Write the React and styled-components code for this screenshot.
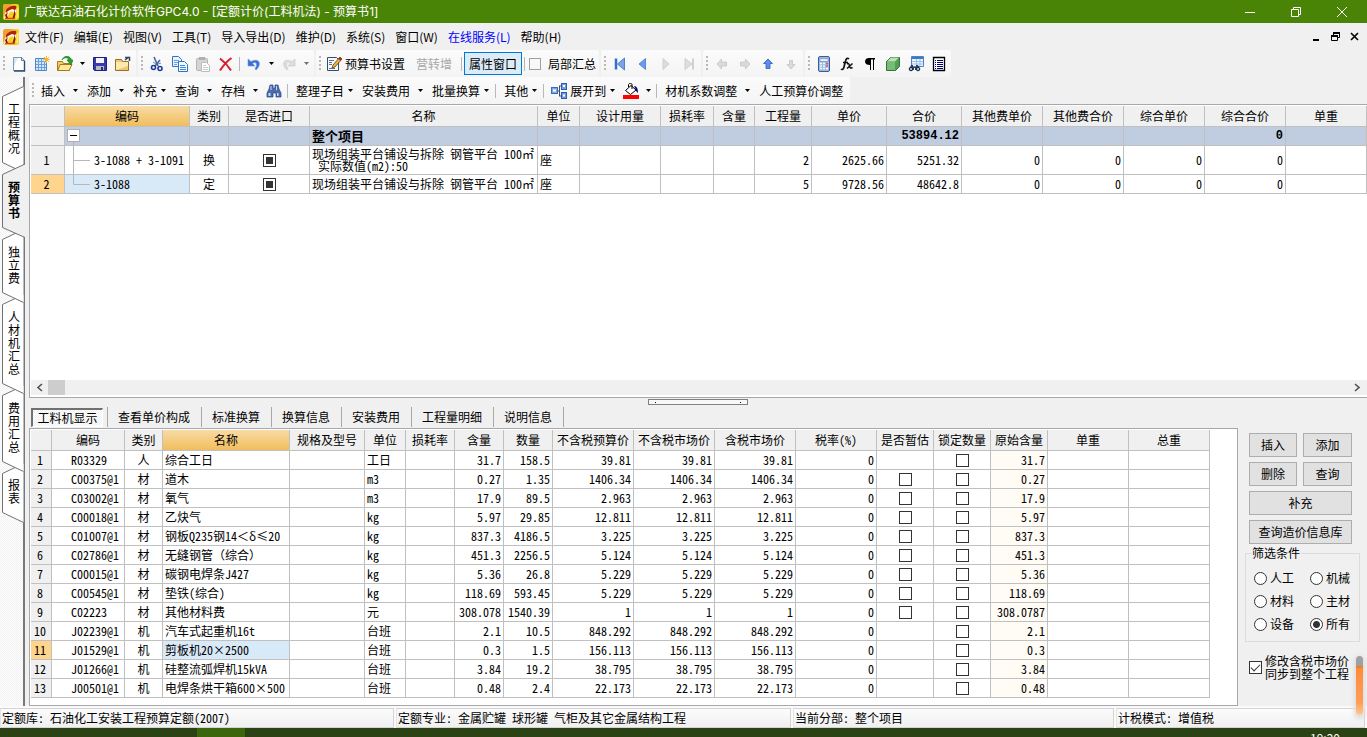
import React, { useState } from 'react';
import styled, { createGlobalStyle, css } from 'styled-components';

const GlobalStyle = createGlobalStyle`
  *, *::before, *::after { box-sizing: border-box; }
  html, body { margin: 0; padding: 0; }
  body {
    overflow: hidden;
    background: #f0f0f0;
    color: #000;
    font: 12px/16px "Noto Sans CJK SC", "Liberation Sans", sans-serif;
  }
  button, input, select { font: inherit; color: inherit; margin: 0; }
  svg { display: block; flex: none; }
`;

/* ---------- frame ---------- */

const Window = styled.div`
  display: flex;
  flex-direction: column;
  height: 100vh;
`;

const TitleBar = styled.header`
  display: flex;
  align-items: center;
  height: 23px;
  padding: 0 5px 0 3px;
  gap: 5px;
  background: #4a8407;
  color: #fff;
`;

const Title = styled.h1`
  flex: 1;
  margin: 0;
  font-family: Inter, "Noto Sans CJK SC", sans-serif;
  font-size: 12px;
  font-weight: 400;
  line-height: 20px;
`;

const WindowButton = styled.button`
  display: flex;
  align-items: center;
  justify-content: center;
  width: 41px;
  height: 20px;
  padding: 0;
  border: 0;
  background: none;
`;

const MenuBar = styled.nav`
  display: flex;
  align-items: center;
  height: 27px;
  padding: 0 3px;
  gap: 10px;
  white-space: nowrap;
`;

const MenuLogo = styled.span`
  margin-right: -4px;
`;

const MenuItem = styled.a`
  color: ${p => (p.$accent ? '#0000ff' : '#000')};
  text-decoration: none;
`;

const ChildControls = styled.div`
  display: flex;
  margin-left: auto;
`;

const ChildButton = styled.button`
  display: flex;
  align-items: center;
  justify-content: center;
  width: 19px;
  height: 16px;
  padding: 0;
  border: 0;
  background: none;
`;

/* ---------- toolbars ---------- */

const Toolbar = styled.div`
  display: flex;
  height: 27px;
  gap: 2px;
  white-space: nowrap;
`;

const ToolGroup = styled.div`
  display: flex;
  align-items: center;
  padding: 0 ${p => (p.$tight ? 1 : 2)}px 0 2px;
  border-radius: 2px;
  background: linear-gradient(#fbfbfb, #f4f4f4);
`;

const Grip = styled.span`
  width: 5px;
  height: 15px;
  background: linear-gradient(#b8b8b8, #b8b8b8) 1px 0 / 2px 2px no-repeat,
    linear-gradient(#b8b8b8, #b8b8b8) 1px 4px / 2px 2px no-repeat,
    linear-gradient(#b8b8b8, #b8b8b8) 1px 8px / 2px 2px no-repeat,
    linear-gradient(#b8b8b8, #b8b8b8) 1px 12px / 2px 2px no-repeat;
`;

const ToolButton = styled.button`
  display: flex;
  align-items: center;
  justify-content: center;
  width: ${p => p.$w || 23}px;
  height: 23px;
  padding: 0;
  border: 0;
  background: none;
`;

const TextButton = styled.button`
  display: flex;
  align-items: center;
  gap: 3px;
  height: 23px;
  padding: 0 ${p => p.$right || 0}px 0 ${p => p.$left || 5}px;
  border: 0;
  background: none;
  &:disabled { color: #a8a8a8; }
`;

const PressedButton = styled.button`
  width: 58px;
  height: 23px;
  padding: 0 4px;
  border: 1px solid #0078d7;
  background: #dcebf8;
  white-space: nowrap;
`;

const Separator = styled.span`
  width: 1px;
  height: 14px;
  margin: 0 ${p => (p.$wide ? 3 : 2)}px 0 2px;
  background: #b8b8b8;
`;

const ArrowSlot = styled.span`
  display: flex;
  width: ${p => (p.$tight ? 13 : 17)}px;
  margin-left: -3px;
  padding-left: ${p => (p.$tight ? 4 : 8)}px;
`;

const ToolCheck = styled.label`
  display: flex;
  align-items: center;
  gap: 7px;
  padding: 0 2px;
`;

/* ---------- workspace ---------- */

const Workspace = styled.div`
  display: flex;
  flex: 1;
  min-height: 0;
`;

const Rail = styled.nav`
  display: flex;
  flex-direction: column;
  flex: none;
  width: 25px;
  padding: 9px 0 0 2px;
  border-right: 2px solid #787878;
  background: repeating-conic-gradient(#f0f0f0 0 25%, #ffffff 0 50%) 0 0 / 2px 2px;
`;

const RailTabButton = styled.button`
  position: relative;
  flex: none;
  width: ${p => (p.$active ? 23 : 21)}px;
  height: ${p => p.$h}px;
  margin-bottom: -9px;
  padding: 0 0 4px;
  border: 0;
  background: none;
  z-index: ${p => p.$z};
  font-weight: ${p => (p.$active ? 700 : 400)};
  line-height: 13px;
`;

const RailShape = styled.svg`
  position: absolute;
  inset: 0;
`;

const RailLabel = styled.span`
  position: relative;
  display: block;
  width: 12px;
  margin-left: 6px;
  word-break: break-all;
`;

const Main = styled.main`
  display: flex;
  flex-direction: column;
  flex: 1;
  min-width: 0;
  padding-left: 4px;
`;

const GridPanel = styled.section`
  display: flex;
  flex-direction: column;
  flex: 1;
  min-height: 0;
  overflow: hidden;
  padding: 1px 0 2px 1px;
  border: 1px solid #a8a8ac;
  border-right: 0;
  background: #fff;
`;

const GridArea = styled.div`
  flex: 1;
  min-height: 0;
  overflow: hidden;
`;

const ScrollTrack = styled.div`
  display: flex;
  align-items: center;
  height: 15px;
  padding: 0 6px 0 5px;
  background: #f0f0f0;
`;

const ScrollThumb = styled.div`
  width: 17px;
  height: 15px;
  margin: 0 auto 0 5px;
  background: #cdcdcd;
`;

const Splitter = styled.div`
  display: flex;
  justify-content: center;
  height: 8px;
  padding-top: 1px;
`;

const SplitHandle = styled.div`
  display: flex;
  justify-content: space-between;
  align-items: center;
  width: 100px;
  height: 6px;
  padding: 0 6px;
  border: 1px solid #808080;
  background: #f8f8f8;
  &::before, &::after { content: ''; width: 1px; height: 1px; background: #000080; }
`;

/* ---------- data tables ---------- */

const Table = styled.table`
  width: ${p => (p.$fill ? '100%' : '1179px')};
  table-layout: fixed;
  border-collapse: separate;
  border-spacing: 0;
  line-height: 12px;
  font-feature-settings: "hwid";
`;

const line = css`
  border-right: 1px solid #c0c0c0;
  border-bottom: 1px solid #c0c0c0;
`;

const Head = styled.th`
  ${line}
  height: 21px;
  padding: 0;
  font-weight: 400;
  white-space: nowrap;
  background: ${p => (p.$current ? 'linear-gradient(#f9dba6, #f0bd5c)' : '#f0f0f0')};
`;

const RowHead = styled.th`
  ${line}
  padding: 0 2px 0 0;
  font-weight: 400;
  background: ${p => (p.$current ? '#ffd48c' : '#f0f0f0')};
`;

const Cell = styled.td`
  ${line}
  height: ${p => p.$h || 19}px;
  padding: 0 2px 0 ${p => (p.$indent ? 19 : 2)}px;
  text-align: ${p => p.$align || 'left'};
  white-space: pre;
  overflow: hidden;
  background: ${p => (p.$current ? '#d8e9f8' : p.$soft ? '#fffbf5' : '#fff')};
`;

const SummaryRow = styled.tr`
  font-size: 13px;
  font-weight: 700;
  font-feature-settings: normal;
  td, th { background: #c0cde0; }
  th { background: #f0f0f0; }
`;

const SummaryNumber = styled(Cell)`
  font-family: "Liberation Mono", monospace;
  font-size: 12px;
`;

const FullWidth = styled.span`
  font-feature-settings: "fwid";
`;

const TreeNode = styled.div`
  display: flex;
  align-items: center;
  gap: 4px;
  margin-left: -2px;
`;

const CheckBox = styled.input.attrs({ type: 'checkbox' })`
  appearance: none;
  display: block;
  flex: none;
  width: ${p => (p.$faint ? 12 : 13)}px;
  height: ${p => (p.$faint ? 12 : 13)}px;
  margin: 0 auto;
  border: 1px solid ${p => (p.$faint ? '#a0a0a0' : '#333')};
  background: ${p => (p.$faint ? '#f8f8f8' : '#fff')};
`;

const SquareBox = styled(CheckBox)`
  &:checked { background: linear-gradient(#333, #333) center / 7px 7px no-repeat #fff; }
`;

const TickBox = styled(CheckBox)`
  margin: 0;
  &:checked {
    background: #fff;
    &::after {
      content: '';
      display: block;
      width: 9px;
      height: 5px;
      margin: 2px 0 0 1px;
      border: solid #333;
      border-width: 0 0 1px 1px;
      rotate: -45deg;
    }
  }
`;

/* ---------- lower area ---------- */

const SubTabs = styled.div`
  display: flex;
  align-items: center;
  height: 22px;
  padding-left: 2px;
`;

const SubTab = styled.button`
  height: 20px;
  padding: 0 11px 0 10px;
  border: 0;
  border-left: 1px solid #a8a8a8;
  background: none;
  line-height: 18px;
`;

const ActiveSubTab = styled.button`
  width: 72px;
  height: 19px;
  margin-right: 4px;
  padding: 0;
  border: 1px solid #fff;
  border-width: 2px 1px 1px 2px;
  border-top-color: #707070;
  border-left-color: #707070;
  background: repeating-conic-gradient(#f0f0f0 0 25%, #ffffff 0 50%) 0 0 / 2px 2px;
  line-height: 16px;
`;

const TabEnd = styled.span`
  width: 1px;
  height: 20px;
  background: #a8a8a8;
`;

const Lower = styled.div`
  display: flex;
  flex: none;
`;

const LowerGrid = styled.section`
  flex: 1;
  min-width: 0;
  height: 278px;
  overflow: hidden;
  padding: 1px 0 0 1px;
  border: 1px solid #a8a8ac;
  background: #fff;
`;

const SidePanel = styled.aside`
  position: relative;
  width: 129px;
  padding: 5px 7px 0 7px;
`;

const ButtonGrid = styled.div`
  display: grid;
  grid-template-columns: 48px 49px;
  gap: 5px 6px;
  padding-left: 4px;
`;

const PushButton = styled.button`
  grid-column: ${p => (p.$wide ? 'span 2' : 'auto')};
  height: 24px;
  padding: 0;
  border: 1px solid #adadad;
  background: #e1e1e1;
  white-space: nowrap;
`;

const FilterBox = styled.fieldset`
  display: grid;
  grid-template-columns: 56px 1fr;
  row-gap: 7px;
  margin: 1px 0 0;
  padding: 9px 0 9px 8px;
  border: 1px solid #dcdcdc;
  legend { margin-left: -3px; padding: 0 1px; }
`;

const RadioLabel = styled.label`
  display: flex;
  align-items: center;
  gap: 3px;
`;

const Radio = styled.input.attrs({ type: 'radio' })`
  appearance: none;
  width: 13px;
  height: 13px;
  border: 1px solid #333;
  border-radius: 50%;
  background: #fff;
  &:checked { background: radial-gradient(circle, #333 3px, #fff 4px); }
`;

const SyncLabel = styled.label`
  display: flex;
  align-items: center;
  gap: 3px;
  margin-top: 12px;
  padding-left: 4px;
  line-height: 13px;
  white-space: nowrap;
`;

const Gauge = styled.div`
  position: absolute;
  right: 4px;
  bottom: -9px;
  width: 7px;
  height: 59px;
  border-radius: 4px;
  background: linear-gradient(#a0a0a0 10px, #e87820 10px, #ff8c3c 13px, #ff9c58 46px, #ffc890);
  box-shadow: 0 2px 4px 2px #dedede;
`;

const StatusBar = styled.footer`
  display: grid;
  grid-template-columns: 396fr 397fr 323fr 251fr;
  flex: none;
  height: 22px;
  padding-top: 2px;
  background: #fafafa;
`;

const StatusCell = styled.div`
  margin-right: 2px;
  padding: 0 1px;
  border: 1px solid #d4d4d4;
  border-left-color: #e4e4e4;
  background: linear-gradient(#fcfcfc, #f0f0f0);
  font-feature-settings: "hwid";
  line-height: 18px;
  white-space: nowrap;
  overflow: hidden;
`;

const TaskBar = styled.div`
  display: flex;
  flex: none;
  justify-content: space-between;
  height: 9px;
  overflow: hidden;
  padding: 0 27px 0 197px;
  background: #2b4214;
  color: #fff;
`;

const TaskItem = styled.div`
  width: 48px;
  height: 9px;
  background: #3c660c;
`;

const Clock = styled.time`
  padding-top: 2px;
`;

/* ---------- icons ---------- */

const Icon = ({ children, w = 16, h = 16 }) => (
  <svg width={w} height={h} viewBox={`0 0 ${w} ${h}`} fill="none" aria-hidden="true">{children}</svg>
);

const Logo = () => (
  <Icon>
    <rect x="0" y="0" width="16" height="16" rx="2" fill="#f9cc22" />
    <path d="M0 2l2-2h8L5 4 2 9 0 14z" fill="#f0a030" />
    <path d="M4 6l6-4 3 1v5l-2 1-2-2-3 2-2 6H1l1-5z" fill="#fff8e0" />
    <path d="M3 6c2-3 6-5 10-4l1 2-2 2-3-1-4 2-2 2z" fill="#b2200e" />
    <path d="M11 5l1.500 5-1 4h-2L11 9zM5 8l-1 3 1 3H3l-1-3z" fill="#7d1c0c" />
    <path d="M2 14.500h10" stroke="#d8480e" strokeWidth="1.400" />
    <path d="M13.500 3l2 1v9l-2 2z" fill="#ffe56a" />
  </Icon>
);

const Caret = ({ color = '#000' }) => (
  <Icon w={5} h={3}><path d="M0 0h5L2.500 3z" fill={color} /></Icon>
);

const icons = {
  file: <Icon><path d="M2.500 1.500h8l3 3v10h-11z" fill="#fff" stroke="#7c96b4" /><path d="M3 2h4l-4 8z" fill="#d8e8f8" /><path d="M13.500 5v10H3" stroke="#2c4c74" strokeWidth="1.400" /><path d="M10.500 1.500v3h3" stroke="#5a7896" /></Icon>,
  sheet: <Icon><path d="M1.500 2.500h9l2 2v10h-11z" fill="#d4e6fa" stroke="#4f86c6" /><path d="M4.500 3v11M7.500 3v11M10.500 5v9M2 5.500h10M2 8.500h10M2 11.500h10" stroke="#6aa0dc" /><path d="M12.500 0v7M9 3.500h7M10 1l5 5M15 1l-5 5" stroke="#f8b820" /></Icon>,
  open: <Icon><path d="M.5 5.500h5l1 2h6v7H.5z" fill="#f4cf6a" stroke="#a87a18" /><path d="M3 8.500h12l-3 6H.8z" fill="#ffe89a" stroke="#a87a18" /><path d="M5 4c2-3 6-3 7 0h-2l4 5 2-5h-1.500C13-1 7-1 5 4z" fill="#28a428" stroke="#127012" strokeWidth=".6" /></Icon>,
  save: <Icon><path d="M1.500 1.500h13v13h-12l-1-1z" fill="#3a3aaa" stroke="#20207c" /><path d="M4 2h8v5H4z" fill="#f4f4ff" /><path d="M4 10h8v4H4z" fill="#b8b8c8" /><path d="M9 11h2v3H9z" fill="#28286c" /></Icon>,
  folder: <Icon><path d="M.5 3.500h6l1 2h6v9H.5z" fill="#f0c874" stroke="#97702a" /><path d="M1 6h12v4L1 14z" fill="#ffe9ac" /><path d="M10 4l4-3M10 1.500h4.500V5" stroke="#304860" strokeWidth="1.500" /></Icon>,
  cut: <Icon><path d="M5 1l4 9M11 4l-5 6" stroke="#4a6496" strokeWidth="1.600" /><path d="M4 6l3 2M9 8l3-1" stroke="#6d88b4" /><circle cx="4.500" cy="11.500" r="2" stroke="#1d3c9a" strokeWidth="1.600" /><circle cx="11" cy="12.500" r="2" stroke="#1d3c9a" strokeWidth="1.600" /></Icon>,
  copy: <Icon><path d="M.5.5h6l3 3v7h-9z" fill="#e8f3ff" stroke="#2f74c8" /><path d="M2 4.500h5M2 6.500h5M2 8.500h3" stroke="#6ba4e4" /><path d="M6.500 5.500h6l3 3v7h-9z" fill="#f4f9ff" stroke="#2f74c8" /><path d="M8 9.500h5M8 11.500h6M8 13.500h6" stroke="#3f86dc" /></Icon>,
  paste: <Icon><rect x="1.500" y="2.500" width="11" height="12" rx="1" fill="#d4d4d4" stroke="#b4b4b4" /><path d="M4 1h6v3H4z" fill="#b0b0b0" /><path d="M6.500 6.500h5l3 3v6h-8z" fill="#fff" stroke="#bcbcbc" /><path d="M8 9.500h3M8 11.500h5M8 13.500h5" stroke="#ccc" /></Icon>,
  remove: <Icon><path d="M2 2.500c4 3 8 7 11 12M13.500 2C9 5 5 10 2 14.500" stroke="#d81c2c" strokeWidth="2" /></Icon>,
  undo: <Icon><path d="M2 3v7h7L6.500 7.500C10 5 12 8 9 13l1 1c6-5 4-13-5-8.500z" fill="#3a70d0" stroke="#6c9be8" strokeWidth=".6" /></Icon>,
  redo: <Icon><path d="M14 3v7H7l2.500-2.500C6 5 4 8 7 13l-1 1C0 9 2 1 11 5.500z" fill="#dcdcdc" stroke="#c8c8c8" strokeWidth=".6" /></Icon>,
  edit: <Icon><path d="M1.500 1.500h9l2 2v11h-11z" fill="#f4f8ff" stroke="#3c4c64" /><path d="M3 4.500h5M3 6.500h3M3 8.500h3M3 12.500h6" stroke="#59718e" /><path d="M14 1l2 2-7 8-3 1 1-3z" fill="#f0b040" stroke="#5c4210" strokeWidth=".8" /><path d="M13 2l2 2" stroke="#a02818" strokeWidth="2" /></Icon>,
  first: <Icon><path d="M4 2.500v11" stroke="#3a6cc8" strokeWidth="2.500" /><path d="M12.500 2v12L5.500 8z" fill="#7ba4ea" stroke="#3a6cc8" strokeWidth=".8" /></Icon>,
  prev: <Icon><path d="M10.500 2.500v11L4 8z" fill="#6d9ae6" stroke="#4878ca" strokeWidth=".8" /></Icon>,
  next: <Icon><path d="M5 2.500v11L11 8z" fill="#dcdcdc" stroke="#c8c8c8" strokeWidth=".8" /></Icon>,
  last: <Icon><path d="M4 2.500v11L11 8z" fill="#dedede" stroke="#c8c8c8" strokeWidth=".8" /><path d="M12 2.500v11" stroke="#d0d0d0" strokeWidth="2" /></Icon>,
  left: <Icon><path d="M7.500 3v3h5v4h-5v3L3 8z" fill="#dadada" stroke="#c4c4c4" strokeWidth=".8" /></Icon>,
  right: <Icon><path d="M8.500 3v3h-5v4h5v3L13 8z" fill="#dadada" stroke="#c4c4c4" strokeWidth=".8" /></Icon>,
  up: <Icon><path d="M8 3L12.500 7.500H10v5H6v-5H3.500z" fill="#5d90ea" stroke="#2c5cb8" strokeWidth=".8" /></Icon>,
  down: <Icon><path d="M8 13L12 8.500H9.500v-4h-3v4H4z" fill="#dadada" stroke="#c4c4c4" strokeWidth=".8" /></Icon>,
  calc: <Icon><rect x="2.500" y=".5" width="11" height="15" rx="1.500" fill="#9fbbe4" stroke="#3c5c98" /><path d="M4 2.500h8v3H4z" fill="#dff0ff" stroke="#6384bc" strokeWidth=".6" /><path d="M4 7.500h2M4 10h2M4 12.500h2M7 7.500h2M7 10h2M7 12.500h2" stroke="#f4f8ff" strokeWidth="1.500" /><path d="M10 7.500h2M10 10h2" stroke="#e05a5a" strokeWidth="1.500" /><path d="M10 12.500h2" stroke="#fff" strokeWidth="1.500" /></Icon>,
  fx: <Icon><path d="M10 3c-1.500-1.500-3-.5-3.500 2L5 11c-.5 2.500-2 3-3 2M4 6.500h5" stroke="#111" strokeWidth="1.700" /><path d="M8 8c2-1 2 0 2.500 2s1 2.500 3 1.500M13.500 7.500L8 12.500" stroke="#111" strokeWidth="1.500" /></Icon>,
  para: <Icon><path d="M3 5.500C3 3 5 2 7 2h6v1.500H8V9C5 9 3 8 3 5.500z" fill="#000" /><path d="M8.500 3v11M11.500 3v11" stroke="#000" /></Icon>,
  cube: <Icon><path d="M1.500 5.500l4-4h9v9l-4 4h-9z" fill="#4f9e53" stroke="#3a6c3c" /><path d="M2 5.500h8l4-4H6z" fill="#b6e4b2" /><path d="M2 6h8v8H2z" fill="#73bd74" /></Icon>,
  find: <Icon><path d="M3.500.5h12v10h-12z" fill="#eef5ff" stroke="#4f82c0" /><path d="M4 1h11v2H4z" fill="#3f78cc" /><path d="M4 5.500h11M4 8h11M8.500 3v7M12 3v7" stroke="#9bbfe8" /><path d="M3 9h2v2h3V9h2l2 5H7v-2H6v2H1z" fill="#31435c" /><circle cx="3" cy="13" r="1.800" stroke="#101c30" fill="#9cb8dc" /><circle cx="10" cy="13" r="1.800" stroke="#101c30" fill="#9cb8dc" /></Icon>,
  list: <Icon><path d="M2.500 1.500h11v13h-11z" fill="#fff" stroke="#000" strokeWidth="1.300" /><path d="M4 4.500h1M4 6.500h1M4 8.500h1M4 10.500h1M4 12.500h1M6 4.500h6M6 6.500h6M6 8.500h6M6 10.500h6M6 12.500h6" stroke="#000078" /></Icon>,
  binoculars: <Icon><path d="M4 2h3v3h2V2h3l1 4 2 4v4h-5v-4H7v4H1v-4l2-4z" fill="#4a6caf" stroke="#27447e" strokeWidth=".7" /><path d="M2.500 10h2v3h-2zM11 10h1.500v3H11zM4.500 3h1v4h-1zM10 3h1v4h-1z" fill="#c4daf8" /></Icon>,
  expand: <Icon><path d="M5 8h4M8.500 3v10M8 3h3M8 13h3" stroke="#4a4a5c" /><rect x=".5" y="4.500" width="6" height="6" fill="#7aa8e4" stroke="#3a6cb8" /><rect x="10.500" y=".5" width="5" height="6" fill="#6fa0e0" stroke="#2f5ca8" /><rect x="10.500" y="9.500" width="5" height="6" fill="#6fa0e0" stroke="#2f5ca8" /><path d="M12 3h2M12 12.500h2M2 7.500h3" stroke="#fff" strokeWidth="2" /></Icon>,
  fill: <Icon><path d="M2.500 7.500l5.500-5 5 4.500-5.500 4.500z" fill="#fff" stroke="#000" /><path d="M5.500 4V1.500C6 0 9 0 9 1.500V6" stroke="#000" /><path d="M11 3c3 0 4 3 4 7l-2-2V7z" fill="#000080" /><path d="M0 12h16v4H0z" fill="#f00" /></Icon>,
};

/* ---------- data ---------- */

const menus = ['文件(F)', '编辑(E)', '视图(V)', '工具(T)', '导入导出(D)', '维护(D)', '系统(S)', '窗口(W)', '在线服务(L)', '帮助(H)'];

const railTabs = [
  { text: '工程概况', h: 87 },
  { text: '预算书', h: 74 },
  { text: '独立费', h: 74 },
  { text: '人材机汇总', h: 100 },
  { text: '费用汇总', h: 87 },
  { text: '报表', h: 60 },
];

const upperCols = [
  ['', 34], ['编码', 125], ['类别', 39], ['是否进口', 81], ['名称', 228], ['单位', 42], ['设计用量', 81],
  ['损耗率', 53], ['含量', 41], ['工程量', 57], ['单价', 75], ['合价', 75], ['其他费单价', 81],
  ['其他费合价', 81], ['综合单价', 81], ['综合合价', 81], ['单重'],
];

const upperRows = [
  { code: '3-1088 + 3-1091', kind: '换', name: '现场组装平台铺设与拆除 钢管平台 100㎡\n 实际数值(m2):50', qty: '2', price: '2625.66', total: '5251.32', h: 29 },
  { code: '3-1088', kind: '定', name: '现场组装平台铺设与拆除 钢管平台 100㎡', qty: '5', price: '9728.56', total: '48642.8', h: 19, current: true },
];

const lowerCols = [
  ['', 21], ['编码', 73], ['类别', 38], ['名称', 127], ['规格及型号', 75], ['单位', 41], ['损耗率', 49],
  ['含量', 49], ['数量', 49], ['不含税预算价', 81], ['不含税市场价', 81], ['含税市场价', 81], ['税率(%)', 81],
  ['是否暂估', 57], ['锁定数量', 57], ['原始含量', 57], ['单重', 81], ['总重', 81],
];

const lowerRows = [
  ['R03329', '人', '综合工日', '工日', '31.7', '158.5', '39.81', '31.7', false],
  ['C00375@1', '材', '道木', 'm3', '0.27', '1.35', '1406.34', '0.27', true],
  ['C03002@1', '材', '氧气', 'm3', '17.9', '89.5', '2.963', '17.9', true],
  ['C00018@1', '材', '乙炔气', 'kg', '5.97', '29.85', '12.811', '5.97', true],
  ['C01007@1', '材', '钢板Q235钢14＜δ≤20', 'kg', '837.3', '4186.5', '3.225', '837.3', true],
  ['C02786@1', '材', '无缝钢管（综合）', 'kg', '451.3', '2256.5', '5.124', '451.3', true],
  ['C00015@1', '材', '碳钢电焊条J427', 'kg', '5.36', '26.8', '5.229', '5.36', true],
  ['C00545@1', '材', '垫铁(综合)', 'kg', '118.69', '593.45', '5.229', '118.69', true],
  ['C02223', '材', '其他材料费', '元', '308.078', '1540.39', '1', '308.0787', true],
  ['J02239@1', '机', '汽车式起重机16t', '台班', '2.1', '10.5', '848.292', '2.1', false],
  ['J01529@1', '机', '剪板机20×2500', '台班', '0.3', '1.5', '156.113', '0.3', false],
  ['J01266@1', '机', '硅整流弧焊机15kVA', '台班', '3.84', '19.2', '38.795', '3.84', false],
  ['J00501@1', '机', '电焊条烘干箱600×500', '台班', '0.48', '2.4', '22.173', '0.48', false],
];

const subTabs = ['查看单价构成', '标准换算', '换算信息', '安装费用', '工程量明细', '说明信息'];
const filters = ['人工', '机械', '材料', '主材', '设备', '所有'];

/* ---------- parts ---------- */

const Tool = ({ icon, label, disabled }) => (
  <ToolButton aria-label={label} disabled={disabled}>{icons[icon]}</ToolButton>
);

const DropArrow = ({ color, label }) => (
  <ToolButton $w={12} aria-label={label}><Caret color={color} /></ToolButton>
);

const DropButton = ({ text, tight, icon }) => (
  <TextButton $left={icon ? 4 : 5}>
    {icon && icons[icon]}
    {text}
    <ArrowSlot $tight={tight}><Caret /></ArrowSlot>
  </TextButton>
);

/* Symbols that keep a full em while the rest of the text uses half-width forms. */
const MixedText = ({ text }) =>
  text.split(/([＜δ≤（）]+)/).map((part, i) => (i % 2 ? <FullWidth key={i}>{part}</FullWidth> : part));

const RailTab = ({ tab, active, z }) => {
  const { h } = tab;
  return (
    <RailTabButton $h={h} $active={active} $z={z}>
      <RailShape width="23" height={h} viewBox={`0 0 23 ${h}`} aria-hidden="true">
        <path
          d={active ? `M23 0L.5 10.500V${h - 10.5}L23 ${h - 0.5}` : `M21.500.5L.5 10.500V${h - 10.5}L21.500 ${h - 0.5}`}
          fill={active ? '#f0f0f0' : '#fff'}
          stroke="#707070"
        />
      </RailShape>
      <RailLabel>{tab.text}</RailLabel>
    </RailTabButton>
  );
};

const Columns = ({ cols }) => (
  <colgroup>{cols.map(([, w], i) => <col key={i} width={w} />)}</colgroup>
);

const HeadRow = ({ cols, current }) => (
  <thead>
    <tr>{cols.map(([text], i) => <Head key={i} scope="col" $current={i === current}>{text}</Head>)}</tr>
  </thead>
);

const UpperTable = () => (
  <Table $fill>
    <Columns cols={upperCols} />
    <HeadRow cols={upperCols} current={1} />
    <tbody>
      <SummaryRow>
        <RowHead />
        <Cell>
          <svg width="17" height="18" viewBox="0 0 17 18" aria-hidden="true">
            <path d="M6.500 15v3" stroke="#b4b4b4" />
            <rect x=".5" y="2.500" width="12" height="12" fill="#fff" stroke="#b0b0b0" />
            <path d="M3 8.500h7" stroke="#000" />
          </svg>
        </Cell>
        <Cell /><Cell />
        <Cell>整个项目</Cell>
        {[0, 1, 2, 3, 4, 5].map(i => <Cell key={i} />)}
        <SummaryNumber $align="right">53894.12</SummaryNumber>
        <Cell /><Cell /><Cell />
        <SummaryNumber $align="right">0</SummaryNumber>
        <Cell />
      </SummaryRow>
      {upperRows.map((r, i) => (
        <tr key={r.code}>
          <RowHead scope="row" $current={r.current}>{i + 1}</RowHead>
          <Cell $h={r.h} $current={r.current}>
            <TreeNode>
              <svg width="25" height={r.h - 1} viewBox={`0 0 25 ${r.h - 1}`} aria-hidden="true">
                <path d={`M8.500 0V${r.current ? 9.5 : r.h}M8.500 ${r.current ? 9.5 : 14.5}H25`} stroke="#b8b8b8" fill="none" />
              </svg>
              {r.code}
            </TreeNode>
          </Cell>
          <Cell $align="center">{r.kind}</Cell>
          <Cell><SquareBox defaultChecked aria-label={`是否进口 ${r.code}`} /></Cell>
          <Cell>{r.name}</Cell>
          <Cell>座</Cell>
          <Cell /><Cell /><Cell />
          <Cell $align="right">{r.qty}</Cell>
          <Cell $align="right">{r.price}</Cell>
          <Cell $align="right">{r.total}</Cell>
          {[0, 1, 2, 3].map(k => <Cell key={k} $align="right">0</Cell>)}
          <Cell />
        </tr>
      ))}
    </tbody>
  </Table>
);

const LowerTable = () => (
  <Table>
    <Columns cols={lowerCols} />
    <HeadRow cols={lowerCols} current={3} />
    <tbody>
      {lowerRows.map(([code, kind, name, unit, rate, qty, price, orig, est], i) => (
        <tr key={code}>
          <RowHead scope="row" $current={i === 10}>{i + 1}</RowHead>
          <Cell $indent>{code}</Cell>
          <Cell $align="center">{kind}</Cell>
          <Cell $current={i === 10}><MixedText text={name} /></Cell>
          <Cell />
          <Cell>{unit}</Cell>
          <Cell />
          <Cell $align="right">{rate}</Cell>
          <Cell $align="right">{qty}</Cell>
          {[0, 1, 2].map(k => <Cell key={k} $align="right">{price}</Cell>)}
          <Cell $align="right">0</Cell>
          <Cell>{est && <CheckBox aria-label={`是否暂估 ${code}`} />}</Cell>
          <Cell><CheckBox aria-label={`锁定数量 ${code}`} /></Cell>
          <Cell $align="right" $soft>{orig}</Cell>
          <Cell /><Cell />
        </tr>
      ))}
    </tbody>
  </Table>
);

export default function App() {
  const [filter, setFilter] = useState('所有');
  return (
    <Window>
      <GlobalStyle />
      <TitleBar>
        <Logo />
        <Title>广联达石油石化计价软件GPC4.0 - [定额计价(工料机法) - 预算书1]</Title>
        <WindowButton aria-label="最小化"><Icon w={10} h={10}><path d="M0 5.500h10" stroke="#fff" /></Icon></WindowButton>
        <WindowButton aria-label="还原"><Icon w={10} h={10}><path d="M.5 2.500h7v7h-7zM2.500 2V.5h7v7H8" stroke="#fff" /></Icon></WindowButton>
        <WindowButton aria-label="关闭"><Icon w={10} h={10}><path d="M0 0l10 10M10 0L0 10" stroke="#fff" /></Icon></WindowButton>
      </TitleBar>

      <MenuBar>
        <MenuLogo><Logo /></MenuLogo>
        {menus.map((m, i) => <MenuItem key={m} href="#" $accent={i === 8}>{m}</MenuItem>)}
        <ChildControls>
          <ChildButton aria-label="最小化文档"><Icon w={9} h={9}><path d="M1 8h6" stroke="#000" strokeWidth="2" /></Icon></ChildButton>
          <ChildButton aria-label="还原文档"><Icon w={9} h={9}><path d="M.5 4.500h6v4h-6zM2.500 4V1.500h6v4H7" stroke="#000" /><path d="M0 4h7M2 1h7" stroke="#000" strokeWidth="2" /></Icon></ChildButton>
          <ChildButton aria-label="关闭文档"><Icon w={9} h={9}><path d="M1 1l7 7M8 1L1 8" stroke="#000" strokeWidth="1.600" /></Icon></ChildButton>
        </ChildControls>
      </MenuBar>

      <Toolbar>
        <ToolGroup>
          <Grip />
          <Tool icon="file" label="新建" />
          <Tool icon="sheet" label="新建表" />
          <Tool icon="open" label="打开" />
          <DropArrow label="打开选项" />
          <Tool icon="save" label="保存" />
          <Tool icon="folder" label="文件夹" />
        </ToolGroup>
        <ToolGroup>
          <Grip />
          <Tool icon="cut" label="剪切" />
          <Tool icon="copy" label="复制" />
          <Tool icon="paste" label="粘贴" disabled />
          <Tool icon="remove" label="删除" />
          <Separator />
          <Tool icon="undo" label="撤销" />
          <DropArrow label="撤销选项" />
          <Tool icon="redo" label="恢复" disabled />
          <DropArrow label="恢复选项" color="#707070" />
        </ToolGroup>
        <ToolGroup $tight>
          <Grip />
          <TextButton $left={3} $right={6}>{icons.edit}预算书设置</TextButton>
          <TextButton $left={5} $right={7} disabled>营转增</TextButton>
          <Separator />
          <PressedButton>属性窗口</PressedButton>
          <Separator />
          <ToolCheck><CheckBox $faint />局部汇总</ToolCheck>
        </ToolGroup>
        <ToolGroup $tight>
          <Grip />
          <Tool icon="first" label="首条" />
          <Tool icon="prev" label="上一条" />
          <Tool icon="next" label="下一条" disabled />
          <Tool icon="last" label="末条" disabled />
        </ToolGroup>
        <ToolGroup $tight>
          <Grip />
          <Tool icon="left" label="左移" disabled />
          <Tool icon="right" label="右移" disabled />
          <Tool icon="up" label="上移" />
          <Tool icon="down" label="下移" disabled />
        </ToolGroup>
        <ToolGroup $tight>
          <Grip />
          <Tool icon="calc" label="计算器" />
          <Tool icon="fx" label="函数" />
          <Tool icon="para" label="段落" />
          <Tool icon="cube" label="图元" />
          <Tool icon="find" label="查找" />
          <Tool icon="list" label="清单" />
        </ToolGroup>
      </Toolbar>

      <Workspace>
        <Rail>
          {railTabs.map((t, i) => <RailTab key={t.text} tab={t} active={i === 1} z={i === 1 ? 9 : 6 - i} />)}
        </Rail>
        <Main>
          <Toolbar>
            <ToolGroup>
              <Grip />
              <DropButton text="插入" />
              <DropButton text="添加" />
              <DropButton text="补充" tight />
              <DropButton text="查询" />
              <DropButton text="存档" />
              <Tool icon="binoculars" label="查找" />
              <Separator $wide />
              <DropButton text="整理子目" tight />
              <DropButton text="安装费用" />
              <DropButton text="批量换算" tight />
              <Separator $wide />
              <DropButton text="其他" tight />
              <Separator $wide />
              <DropButton text="展开到" icon="expand" tight />
              <Tool icon="fill" label="填充颜色" />
              <DropArrow label="颜色选项" />
              <Separator $wide />
              <DropButton text="材机系数调整" />
              <TextButton $right={5}>人工预算价调整</TextButton>
            </ToolGroup>
          </Toolbar>

          <GridPanel>
            <GridArea><UpperTable /></GridArea>
            <ScrollTrack>
              <Icon w={7} h={9}><path d="M6 1L2 4.500l4 3.500" stroke="#505050" strokeWidth="1.600" /></Icon>
              <ScrollThumb />
              <Icon w={7} h={9}><path d="M1 1l4 3.500L1 8" stroke="#505050" strokeWidth="1.600" /></Icon>
            </ScrollTrack>
          </GridPanel>

          <Splitter><SplitHandle /></Splitter>

          <SubTabs>
            <ActiveSubTab>工料机显示</ActiveSubTab>
            {subTabs.map(t => <SubTab key={t}>{t}</SubTab>)}
            <TabEnd />
          </SubTabs>

          <Lower>
            <LowerGrid><LowerTable /></LowerGrid>
            <SidePanel>
              <ButtonGrid>
                <PushButton>插入</PushButton>
                <PushButton>添加</PushButton>
                <PushButton>删除</PushButton>
                <PushButton>查询</PushButton>
                <PushButton $wide>补充</PushButton>
                <PushButton $wide>查询造价信息库</PushButton>
              </ButtonGrid>
              <FilterBox>
                <legend>筛选条件</legend>
                {filters.map(f => (
                  <RadioLabel key={f}>
                    <Radio name="filter" checked={filter === f} onChange={() => setFilter(f)} />
                    {f}
                  </RadioLabel>
                ))}
              </FilterBox>
              <SyncLabel>
                <TickBox defaultChecked />
                <span>修改含税市场价<br />同步到整个工程</span>
              </SyncLabel>
              <Gauge />
            </SidePanel>
          </Lower>
        </Main>
      </Workspace>

      <StatusBar>
        <StatusCell>定额库: 石油化工安装工程预算定额(2007)</StatusCell>
        <StatusCell>定额专业: 金属贮罐 球形罐 气柜及其它金属结构工程</StatusCell>
        <StatusCell>当前分部: 整个项目</StatusCell>
        <StatusCell>计税模式: 增值税</StatusCell>
      </StatusBar>
      <TaskBar>
        <TaskItem />
        <Clock>19:20</Clock>
      </TaskBar>
    </Window>
  );
}
